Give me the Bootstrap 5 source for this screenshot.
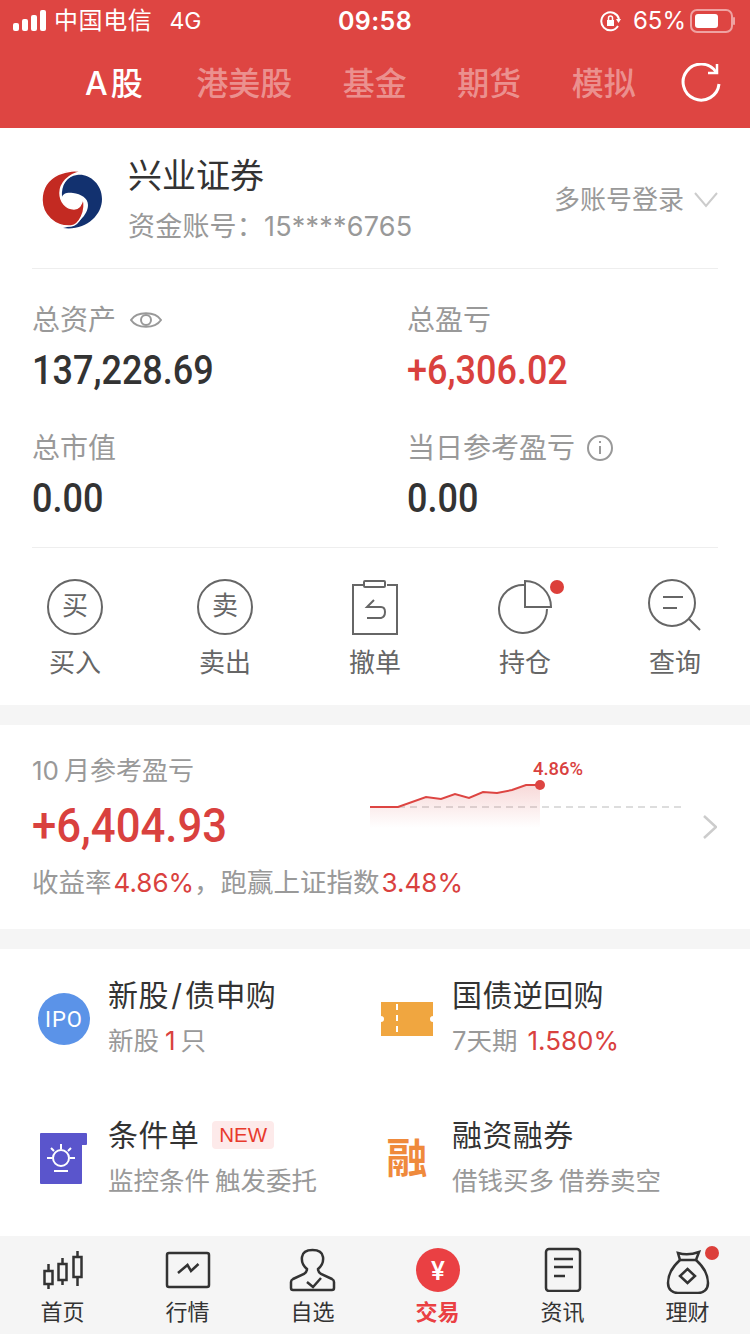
<!DOCTYPE html>
<html lang="zh-CN">
<head>
  <meta charset="UTF-8" />
  <meta name="viewport" content="width=device-width, initial-scale=1.0" />
  <title>交易</title>
  <link href="https://cdn.jsdelivr.net/npm/bootstrap@5.3.0/dist/css/bootstrap.min.css" rel="stylesheet" />
  <script src="https://cdn.jsdelivr.net/npm/bootstrap@5.3.0/dist/js/bootstrap.bundle.min.js"></script>
  <style>
    body { width: 750px; height: 1334px; overflow: hidden; background: #f5f5f5; color: #333; font-family: "Inter", "Noto Sans CJK SC", sans-serif; }
    svg { display: block; flex-shrink: 0; }

    /* Red header */
    .app-head { height: 128px; background: #de4542; color: #fff; }
    .status-row { height: 42px; padding: 0 15px 0 13px; font-size: 24px; line-height: 42px; }
    .status-carrier { letter-spacing: .6px; }
    .status-net { margin-left: 17px; font-size: 23px; }
    .status-clock { position: absolute; left: 0; right: 0; text-align: center; font-size: 25px; font-weight: 600; letter-spacing: .4px; }
    .status-pct { font-size: 24px; margin-left: 11px; }
    .market-tabs { height: 86px; padding-left: 85px; gap: 50.500px; font-size: 32px; font-weight: 500; color: rgba(255,255,255,.42); line-height: 84px; white-space: nowrap; }
    .market-tabs span { flex-shrink: 0; }
    .market-tabs .is-on { color: #fff; letter-spacing: 3px; }
    .reload-mark { margin: 21px 0 0 -5px; }

    /* Account */
    .sheet { background: #fff; }
    .acct-row { margin: 0 32px; padding: 26px 0 23px; border-bottom: 1px solid #eee; }
    .acct-logo { margin: 0 25px 0 9px; }
    .acct-name { font-size: 34px; line-height: 44px; margin-bottom: 11px; color: #333; }
    .acct-no { font-size: 27px; line-height: 36px; color: #999; letter-spacing: .2px; }
    .acct-more { font-size: 26px; color: #999; }
    .acct-more svg { margin-left: 10px; }

    .stat-grid { display: grid; grid-template-columns: 375px 311px; margin: 0 32px; padding: 33px 0 23px; row-gap: 34px; border-bottom: 1px solid #eee; }
    .stat-label { font-size: 28px; line-height: 36px; color: #999; }
    .stat-num { font-family: "Roboto", sans-serif; font-size: 40px; font-weight: 500; line-height: 50px; margin-top: 8px; color: #333; transform: scaleX(.9); transform-origin: left center; }
    .tone-red { color: #d9413e; }
    .eye-mark { margin-left: 14px; }
    .info-mark { margin-left: 11px; }

    .act-row { padding: 31px 0 24px; }
    .act-item { width: 150px; text-align: center; color: #666; }
    .act-icon { height: 58px; }
    .act-name { font-size: 26px; line-height: 36px; margin-top: 8px; }
    .act-ring { width: 56px; height: 56px; border: 2px solid #666; font-size: 26px; line-height: 50px; margin: 0 auto; }

    .gap-band { height: 20px; background: #f5f5f5; }

    /* Month summary */
    .month-box { height: 204px; padding: 30px 0 0 32px; }
    .month-label { font-size: 26px; line-height: 32px; color: #999; }
    .month-label span { margin-right: 5px; }
    .month-num { font-family: "Roboto", sans-serif; font-size: 48px; font-weight: 500; line-height: 78px; transform: scaleX(.91); transform-origin: left center; }
    .month-note { font-size: 26.500px; line-height: 34px; color: #999; }
    .month-note span { font-size: 26px; margin-left: 2px; line-height: 1; }
    .month-left { width: 338px; }

    /* Service entries */
    .svc-grid { display: grid; grid-template-columns: 344px 344px; padding: 26px 32px 0; height: 287px; row-gap: 56px; align-content: start; }
    .svc-title { font-size: 30px; line-height: 40px; color: #333; letter-spacing: .4px; }
    .svc-slash { margin: 0 2.500px; }
    .svc-sub { font-size: 25.500px; line-height: 36px; margin-top: 8px; color: #999; }
    .svc-count { margin: 0 5px 0 6px; font-size: 26px; line-height: 1; }
    .svc-rate { margin-left: 10px; font-size: 26px; line-height: 1; }
    .svc-word { margin-right: 5px; }
    .new-tag { font-family: "Liberation Sans", sans-serif; font-size: 20.500px; line-height: 28px; padding: 0 7px; margin-left: 13px; background: #fdeaea; color: #e8392c; border-radius: 4px; letter-spacing: 0; }

    /* Bottom tabs */
    .foot-bar { height: 98px; padding-top: 4px; background: #f5f5f5; }
    .foot-item { width: 125px; text-align: center; font-size: 22px; line-height: 30px; color: #333; }
    .foot-item.is-on { color: #ea4043; font-weight: 700; }
    .foot-item span { display: block; margin-top: 5px; }
  </style>
</head>
<body>

  <!-- Header -->
  <div class="app-head">
    <div class="status-row d-flex align-items-center position-relative">
      <svg width="33" height="22" viewBox="0 0 33 22" fill="#fff">
        <rect x="0" y="13" width="6" height="8" rx="2"/>
        <rect x="9" y="9" width="6" height="12" rx="2"/>
        <rect x="18" y="5" width="6" height="16" rx="2"/>
        <rect x="27" y="0" width="6" height="21" rx="2"/>
      </svg>
      <span class="ms-2 status-carrier">中国电信</span>
      <span class="status-net">4G</span>
      <span class="status-clock">09:58</span>
      <svg class="ms-auto" width="22" height="22" viewBox="0 0 22 22" fill="none" stroke="#fff" stroke-width="2">
        <path d="M18 16a9 9 0 1 1 1-7"/><path d="M16 9h5l-2.500 4z" fill="#fff" stroke="none"/>
        <rect x="7" y="10" width="7" height="6" fill="#fff" stroke="none"/><path d="M8.500 10V8a2 2 0 0 1 4 0v2" stroke-width="1.500"/>
      </svg>
      <span class="status-pct">65%</span>
      <svg class="ms-1" width="45" height="24" viewBox="0 0 45 24" fill="none">
        <rect x="1" y="1" width="41" height="22" rx="6" stroke="#fff" stroke-opacity=".5" stroke-width="2"/>
        <rect x="5" y="5" width="23" height="14" rx="3" fill="#fff"/>
        <rect x="43" y="8" width="2" height="8" rx="1" fill="#fff" fill-opacity=".5"/>
      </svg>
    </div>
    <div class="market-tabs d-flex">
      <span class="is-on">A股</span>
      <span>港美股</span>
      <span>基金</span>
      <span>期货</span>
      <span>模拟</span>
      <svg class="reload-mark" width="40" height="40" viewBox="0 0 40 40" fill="none" stroke="#fff" stroke-width="3">
        <path d="M35 9A18 18 0 1 0 38 21"/><path d="M27 10h9V1" stroke-width="2.500"/>
      </svg>
    </div>
  </div>

  <!-- Account -->
  <div class="sheet">
    <div class="acct-row d-flex align-items-center">
      <svg class="acct-logo" width="62" height="62" viewBox="0 0 62 62">
        <path fill="#12316f" d="M22 59C44 62 61 47 61 30 61 14 47 4 36 6 26 7 20 16 21 28 22 24 27 23 32 24 40 25 47 29 47 36 47 46 36 57 22 59Z"/>
        <path fill="#c32a22" stroke="#fff" stroke-width="1.500" d="M40 3C32-1 1 4 1 31 1 46 14 58 30 57 38 56 46 42 42 29 41 35 38 40 33 40 25 40 19 33 19 24 19 15 27 5 40 3Z"/>
      </svg>
      <div>
        <div class="acct-name">兴业证券</div>
        <div class="acct-no">资金账号：15****6765</div>
      </div>
      <div class="acct-more ms-auto d-flex align-items-center">
        多账号登录
        <svg width="24" height="16" viewBox="0 0 24 16" fill="none" stroke="#ccc" stroke-width="2"><path d="M1 1l11 13L23 1"/></svg>
      </div>
    </div>

    <div class="stat-grid">
      <div>
        <div class="stat-label d-flex align-items-center">总资产
          <svg class="eye-mark" width="32" height="24" viewBox="0 0 32 24" fill="none" stroke="#999" stroke-width="2"><path d="M1 12C7 3 25 3 31 12 25 21 7 21 1 12z"/><circle cx="16" cy="12" r="5"/></svg>
        </div>
        <div class="stat-num">137,228.69</div>
      </div>
      <div>
        <div class="stat-label">总盈亏</div>
        <div class="stat-num tone-red">+6,306.02</div>
      </div>
      <div>
        <div class="stat-label">总市值</div>
        <div class="stat-num">0.00</div>
      </div>
      <div>
        <div class="stat-label d-flex align-items-center">当日参考盈亏
          <svg class="info-mark" width="28" height="28" viewBox="0 0 28 28" fill="none" stroke="#999" stroke-width="2"><circle cx="14" cy="14" r="12"/><path d="M14 12v8M14 7v2"/></svg>
        </div>
        <div class="stat-num">0.00</div>
      </div>
    </div>

    <div class="act-row d-flex">
      <div class="act-item">
        <div class="act-icon"><div class="act-ring rounded-circle">买</div></div>
        <div class="act-name">买入</div>
      </div>
      <div class="act-item">
        <div class="act-icon"><div class="act-ring rounded-circle">卖</div></div>
        <div class="act-name">卖出</div>
      </div>
      <div class="act-item">
        <div class="act-icon d-flex justify-content-center">
          <svg width="46" height="58" viewBox="0 0 46 58" fill="none" stroke="#666" stroke-width="2">
            <path d="M11 6H1v49h44V6H35"/><rect x="12" y="2" width="21" height="6" rx="1"/>
            <path d="M23 21l-7 7h4M16 28h14q4 0 4 5t-4 6H16" transform="translate(-1 0)" stroke-width="2"/>
          </svg>
        </div>
        <div class="act-name">撤单</div>
      </div>
      <div class="act-item">
        <div class="act-icon d-flex justify-content-center">
          <svg width="90" height="58" viewBox="0 0 90 58" fill="none" stroke="#666" stroke-width="2">
            <path d="M45 6A24 24 0 1 0 67 30"/>
            <path d="M45 2V28H71A26 26 0 0 0 45 2z"/>
            <circle cx="77" cy="8" r="7" fill="#dc3f3a" stroke="none"/>
          </svg>
        </div>
        <div class="act-name">持仓</div>
      </div>
      <div class="act-item">
        <div class="act-icon d-flex justify-content-center">
          <svg width="56" height="58" viewBox="0 0 56 58" fill="none" stroke="#666" stroke-width="2">
            <circle cx="25" cy="24" r="23"/><path d="M42 40l11 11"/><path d="M16 18h20M16 29h14"/>
          </svg>
        </div>
        <div class="act-name">查询</div>
      </div>
    </div>
  </div>

  <div class="gap-band"></div>

  <!-- Month summary -->
  <div class="sheet month-box">
    <div class="d-flex">
      <div class="month-left">
        <div class="month-label"><span>10</span>月参考盈亏</div>
        <div class="month-num tone-red">+6,404.93</div>
      </div>
      <svg width="312" height="110" viewBox="370 755 312 110" fill="none">
        <defs>
          <linearGradient id="areaFade" x1="0" y1="0" x2="0" y2="1">
            <stop offset="0" stop-color="#d9413e" stop-opacity=".2"/>
            <stop offset="1" stop-color="#d9413e" stop-opacity="0"/>
          </linearGradient>
        </defs>
        <path d="M398 807H682" stroke="#ddd" stroke-width="2" stroke-dasharray="7 5"/>
        <path d="M370 807H398L426 797 441 799 455 794 469 798 483 792 497 793 512 790 526 785H540V828H370z" fill="url(#areaFade)"/>
        <path d="M370 807H398L426 797 441 799 455 794 469 798 483 792 497 793 512 790 526 785H540" stroke="#dd4542" stroke-width="2"/>
        <circle cx="540" cy="785" r="5" fill="#dd4542"/>
        <text x="533" y="775" font-family="Roboto, sans-serif" font-size="19" font-weight="500" fill="#d9413e" textLength="50" lengthAdjust="spacingAndGlyphs">4.86%</text>
      </svg>
      <svg class="ms-auto" style="margin-right:33px" width="14" height="110" viewBox="703 755 14 110" fill="none" stroke="#ccc" stroke-width="2.500"><path d="M704 816l12 11-12 11"/></svg>
    </div>
    <div class="month-note">收益率<span class="tone-red">4.86%</span>，跑赢上证指数<span class="tone-red">3.48%</span></div>
  </div>

  <div class="gap-band"></div>

  <!-- Service entries -->
  <div class="sheet svc-grid">
    <div class="d-flex">
      <svg width="76" height="84" viewBox="0 0 76 84">
        <circle cx="32" cy="44" r="26" fill="#5b93e8"/>
        <text x="32" y="52" text-anchor="middle" font-family="Roboto, sans-serif" font-size="22" letter-spacing="1" fill="#fff">IPO</text>
      </svg>
      <div>
        <div class="svc-title">新股<span class="svc-slash">/</span>债申购</div>
        <div class="svc-sub">新股<span class="svc-count tone-red">1</span>只</div>
      </div>
    </div>
    <div class="d-flex">
      <svg width="76" height="84" viewBox="0 0 76 84">
        <path fill="#f0a640" d="M5 27H57V41a3 3 0 0 0 0 6V61H5V47a3 3 0 0 0 0-6z"/>
        <path d="M21 27V61" stroke="#fff" stroke-width="2" stroke-dasharray="6 5" stroke-dashoffset="-2"/>
      </svg>
      <div>
        <div class="svc-title">国债逆回购</div>
        <div class="svc-sub">7天期<span class="svc-rate tone-red">1.580%</span></div>
      </div>
    </div>
    <div class="d-flex">
      <svg width="76" height="84" viewBox="0 0 76 84" fill="none">
        <path fill="#5a55cc" d="M9 18H54q1 0 1 1V29q0 1-1 1H50V68q0 1-1 1H9q-1 0-1-1V19q0-1 1-1z"/>
        <g stroke="#fff" stroke-width="2">
          <circle cx="29" cy="43" r="8"/>
          <path d="M29 29v5M15 43h5M38 43h5M19 33l3 3M39 33l-3 3M22 56h14"/>
        </g>
      </svg>
      <div>
        <div class="svc-title d-flex align-items-center">条件单<span class="new-tag">NEW</span></div>
        <div class="svc-sub"><span class="svc-word">监控条件</span>触发委托</div>
      </div>
    </div>
    <div class="d-flex">
      <svg width="76" height="84" viewBox="0 0 76 84">
        <text x="31" y="58" text-anchor="middle" font-family="Noto Sans CJK SC, sans-serif" font-size="41" font-weight="700" fill="#ef8a3c">融</text>
      </svg>
      <div>
        <div class="svc-title">融资融券</div>
        <div class="svc-sub"><span class="svc-word">借钱买多</span>借券卖空</div>
      </div>
    </div>
  </div>

  <!-- Bottom tabs -->
  <div class="foot-bar d-flex">
    <div class="foot-item">
      <svg width="125" height="52" viewBox="0 0 125 52" fill="none" stroke="#333" stroke-width="2.500">
        <rect x="44.500" y="31" width="8" height="13"/><path d="M48.500 24v7M48.500 44v5"/>
        <rect x="58.500" y="24" width="8" height="16"/><path d="M62.500 18v6M62.500 40v5"/>
        <rect x="73.500" y="17" width="8" height="20"/><path d="M77.500 11v6M77.500 37v9"/>
      </svg>
      <span>首页</span>
    </div>
    <div class="foot-item">
      <svg width="125" height="52" viewBox="0 0 125 52" fill="none" stroke="#333" stroke-width="2.500">
        <rect x="42" y="13" width="42" height="34" rx="2"/><path d="M53 33l9.500-8 3.500 6 7.500-7"/>
      </svg>
      <span>行情</span>
    </div>
    <div class="foot-item">
      <svg width="125" height="52" viewBox="0 0 125 52" fill="none" stroke="#333" stroke-width="2.500">
        <path d="M43 50H82Q84 50 84 48V42Q84 40 82 39L71 34Q68 32 68 29 74 24 73 17 72 10 62.500 10 53 10 52 17 51 24 57 29 57 32 54 34L43 39Q41 40 41 42V48Q41 50 43 50Z"/>
        <path d="M57 42l6 5 8-9"/>
      </svg>
      <span>自选</span>
    </div>
    <div class="foot-item is-on">
      <svg width="125" height="52" viewBox="0 0 125 52">
        <circle cx="63" cy="30" r="22" fill="#ea4043"/>
        <text x="63" y="40" text-anchor="middle" font-family="Roboto, sans-serif" font-size="26" font-weight="500" fill="#fff">¥</text>
      </svg>
      <span>交易</span>
    </div>
    <div class="foot-item">
      <svg width="125" height="52" viewBox="0 0 125 52" fill="none" stroke="#333" stroke-width="2.500">
        <rect x="46" y="9" width="34" height="42" rx="3"/><path d="M54 19h19M54 27h19M54 36h11"/>
      </svg>
      <span>资讯</span>
    </div>
    <div class="foot-item">
      <svg width="125" height="54" viewBox="0 0 125 54" fill="none" stroke="#333" stroke-width="2.500" style="margin-bottom:-2px">
        <path d="M55 20C46 28 43 37 43 43 43 50 48 53 53 53H73C78 53 83 50 83 43 83 37 80 28 71 20"/>
        <path d="M53 13Q63 16 74 12L71 20H55Z"/>
        <path d="M62.500 29l7.500 7-7.500 7-7.500-7z"/>
        <circle cx="87" cy="13" r="7" fill="#dc3f3a" stroke="none"/>
      </svg>
      <span>理财</span>
    </div>
  </div>

</body>
</html>
